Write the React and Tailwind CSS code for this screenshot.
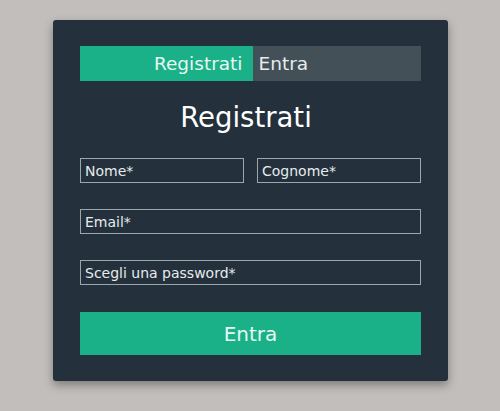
import React, { useState } from 'react';

const font = { fontFamily: '"DejaVu Sans", Verdana, sans-serif' };

function Field({ placeholder, className = '' }) {
  return (
    <input
      type="text"
      placeholder={placeholder}
      className={`h-[25px] border border-[#9aa8ab] bg-transparent px-[4px] text-[14px] text-white placeholder:text-[#e6ecec] outline-none ${className}`}
    />
  );
}

export default function App() {
  const [tab, setTab] = useState('signup');

  return (
    <div className="flex h-[411px] w-[500px] items-start justify-center bg-[#c1bebb] pt-[20px] pl-[1px]" style={font}>
      {/* Card */}
      <div className="flex h-[361px] w-[395px] flex-col rounded-[3px] bg-[#24303c] px-[27px] pt-[26px] shadow-[0_4px_10px_rgba(0,0,0,0.35)]">
        {/* Tabs */}
        <div className="flex h-[35px]">
          <button
            onClick={() => setTab('signup')}
            className="flex flex-1 items-center justify-end bg-[#1ab188] pr-[10px] text-[18.5px] text-[#e8f7f2]"
          >
            Registrati
          </button>
          <button
            onClick={() => setTab('login')}
            className="flex flex-1 items-center justify-start bg-[#435058] pl-[6px] text-[18.5px] text-[#e8ecee]"
          >
            Entra
          </button>
        </div>

        <h1 className="mt-[18px] pr-[9px] text-center text-[27.5px] leading-[36px] text-white">Registrati</h1>

        <div className="mt-[23px] flex gap-[13px]">
          <Field placeholder="Nome*" className="w-[164px]" />
          <Field placeholder="Cognome*" className="w-[164px]" />
        </div>

        <Field placeholder="Email*" className="mt-[26px] w-full" />
        <Field placeholder="Scegli una password*" className="mt-[26px] w-full" />

        <button className="mt-[27px] h-[43px] w-full bg-[#1ab188] text-[20px] text-[#e8f7f2]">Entra</button>
      </div>
    </div>
  );
}
